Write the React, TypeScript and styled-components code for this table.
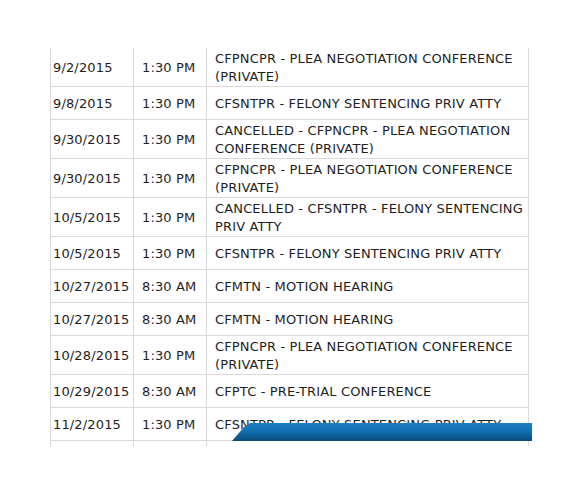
import React from "react";
import styled, { createGlobalStyle } from "styled-components";

const Global = createGlobalStyle`
  html, body { margin: 0; padding: 0; background: #ffffff; }
  body { font-family: "DejaVu Sans", Verdana, sans-serif; }
`;

const Page = styled.div`
  position: relative;
  width: 582px;
  height: 491px;
  padding: 48px 0 0 50px;
  box-sizing: border-box;
`;

const Clip = styled.div`
  width: 479px;
  height: 398px;
  overflow: hidden;
`;

const Table = styled.div`
  display: flex;
  flex-direction: column;
`;

const Row = styled.div`
  display: grid;
  grid-template-columns: 83px 73px 323px;
  border-bottom: 1px solid #d9d9d9;
`;

const Cell = styled.div<{ $pad: number; $last?: boolean }>`
  box-sizing: border-box;
  min-height: 32px;
  padding: 2px 0 1px ${(p) => p.$pad}px;
  border-left: 1px solid #d9d9d9;
  border-right: ${(p) => (p.$last ? "1px solid #d9d9d9" : "none")};
  display: flex;
  align-items: center;
  font-size: 13px;
  letter-spacing: 0.15px;
  line-height: 17.5px;
  color: #1e1e1e;
  white-space: nowrap;
`;

const Desc = styled(Cell)`
  white-space: normal;
  padding-right: 0;
`;

const Bar = styled.div`
  position: absolute;
  left: 232px;
  top: 423px;
  width: 300px;
  height: 18px;
  background: linear-gradient(to bottom, #1d80c2 0%, #1270ae 45%, #0b5890 80%, #0a4673 100%);
  clip-path: polygon(18px 0, 100% 0, 100% 100%, 0 100%, 12px 4px);
  border-top-left-radius: 6px;
`;

const rows: [string, string, string][] = [
  ["9/2/2015", "1:30 PM", "CFPNCPR - PLEA NEGOTIATION CONFERENCE (PRIVATE)"],
  ["9/8/2015", "1:30 PM", "CFSNTPR - FELONY SENTENCING PRIV ATTY"],
  ["9/30/2015", "1:30 PM", "CANCELLED - CFPNCPR - PLEA NEGOTIATION CONFERENCE (PRIVATE)"],
  ["9/30/2015", "1:30 PM", "CFPNCPR - PLEA NEGOTIATION CONFERENCE (PRIVATE)"],
  ["10/5/2015", "1:30 PM", "CANCELLED - CFSNTPR - FELONY SENTENCING PRIV ATTY"],
  ["10/5/2015", "1:30 PM", "CFSNTPR - FELONY SENTENCING PRIV ATTY"],
  ["10/27/2015", "8:30 AM", "CFMTN - MOTION HEARING"],
  ["10/27/2015", "8:30 AM", "CFMTN - MOTION HEARING"],
  ["10/28/2015", "1:30 PM", "CFPNCPR - PLEA NEGOTIATION CONFERENCE (PRIVATE)"],
  ["10/29/2015", "8:30 AM", "CFPTC - PRE-TRIAL CONFERENCE"],
  ["11/2/2015", "1:30 PM", "CFSNTPR - FELONY SENTENCING PRIV ATTY"],
  ["", "", ""],
];

export default function App() {
  return (
    <>
      <Global />
      <Page>
        <Clip>
          <Table>
            {rows.map(([d, t, s], i) => (
              <Row key={i}>
                <Cell $pad={2}>{d}</Cell>
                <Cell $pad={8}>{t}</Cell>
                <Desc $pad={8} $last>
                  {s}
                </Desc>
              </Row>
            ))}
          </Table>
        </Clip>
        <Bar />
      </Page>
    </>
  );
}
